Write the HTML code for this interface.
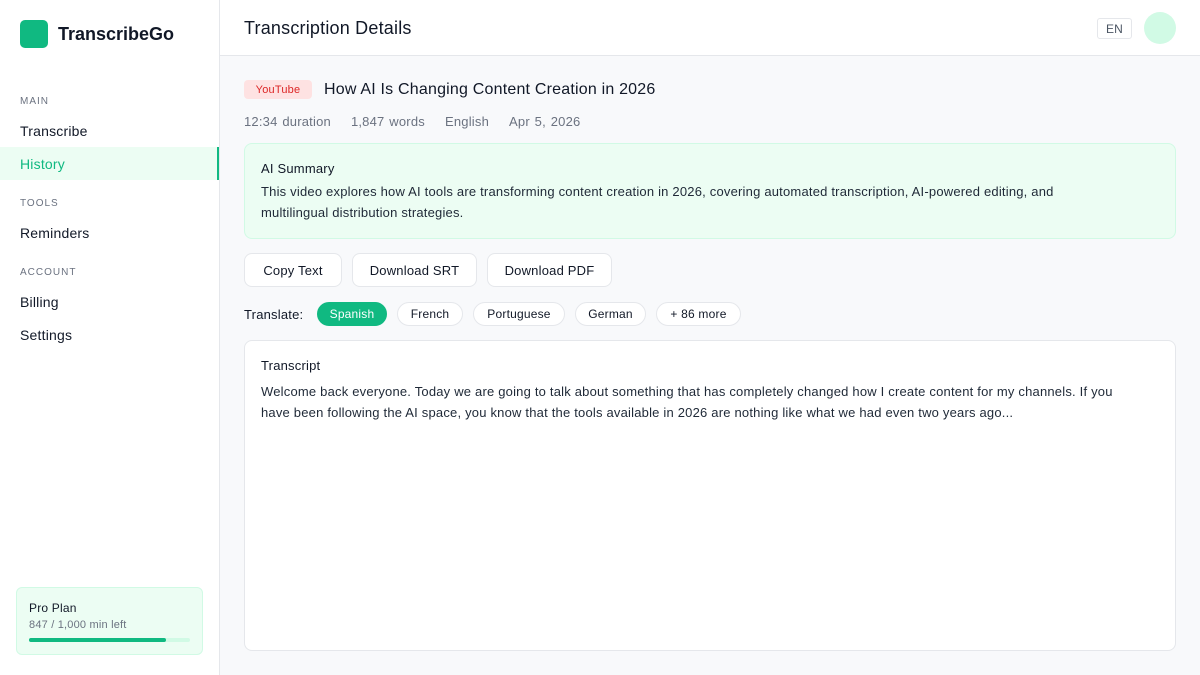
<!DOCTYPE html>
<html><head><style>
*{box-sizing:border-box;margin:0;padding:0}
body{width:1200px;height:675px;font-family:"Liberation Sans",sans-serif;color:#111827;background:#f8f9fb;position:relative;overflow:hidden;letter-spacing:0.2px}
.side{position:absolute;left:0;top:0;width:220px;height:675px;background:#fff;border-right:1px solid #e5e7eb}
.logo{position:absolute;left:20px;top:20px;width:28px;height:28px;border-radius:5px;background:#10b981}
.brand{position:absolute;left:58px;top:24px;font-size:18px;font-weight:bold;color:#111827;letter-spacing:0}
.sec{position:absolute;left:20px;font-size:10px;letter-spacing:1px;color:#6b7280}
.nav{position:absolute;left:0;width:219px;height:33px;padding-left:20px;line-height:35px;font-size:14px;color:#111827}
.nav.act{background:#ecfdf3;color:#10b981;border-right:2px solid #10b981}
.plan{position:absolute;left:16px;top:587px;width:187px;height:68px;border:1px solid #d1fae5;background:#ecfdf3;border-radius:6px}
.top{position:absolute;left:220px;top:0;right:0;height:56px;border-bottom:1px solid #e5e7eb;background:#fff}
.abs{position:absolute}
.btn{position:absolute;top:253px;height:34px;border:1px solid #e5e7eb;border-radius:8px;background:#fff;font-size:13px;line-height:33px;text-align:center}
.pill{position:absolute;top:302px;height:24px;border:1px solid #e5e7eb;border-radius:12px;background:#fff;font-size:12px;line-height:23px;text-align:center;color:#111827}
</style></head><body>
<div class="side">
<div class="logo"></div><div class="brand">TranscribeGo</div>
<div class="sec" style="top:96px">MAIN</div>
<div class="nav" style="top:114px">Transcribe</div>
<div class="nav act" style="top:147px">History</div>
<div class="sec" style="top:198px">TOOLS</div>
<div class="nav" style="top:216px">Reminders</div>
<div class="sec" style="top:267px">ACCOUNT</div>
<div class="nav" style="top:285px">Billing</div>
<div class="nav" style="top:318px">Settings</div>
<div class="plan">
<div class="abs" style="left:12px;top:13px;font-size:12px">Pro Plan</div>
<div class="abs" style="left:12px;top:31px;font-size:11px;color:#6b7280">847 / 1,000 min left</div>
<div class="abs" style="left:12px;top:50px;width:161px;height:4px;border-radius:2px;background:#d1fae5"><div style="width:85%;height:4px;border-radius:2px;background:#10b981"></div></div>
</div>
</div>
<div class="top">
<div class="abs" style="left:24px;top:18px;font-size:18px">Transcription Details</div>
<div class="abs" style="left:877px;top:18px;width:35px;height:21px;border:1px solid #e5e7eb;border-radius:3px;font-size:12px;line-height:20px;text-align:center;color:#4b5563">EN</div>
<div class="abs" style="left:924px;top:12px;width:32px;height:32px;border-radius:50%;background:#d1fae5"></div>
</div>
<div class="abs" style="left:244px;top:80px;width:68px;height:19px;border-radius:4px;background:#fee2e2;color:#dc2626;font-size:11px;line-height:20px;text-align:center">YouTube</div>
<div class="abs" style="left:324px;top:81px;font-size:16px">How AI Is Changing Content Creation in 2026</div>
<div class="abs" style="left:244px;top:114px;font-size:13px;color:#6b7280;word-spacing:1px">12:34 duration<span style="margin-left:20px">1,847 words</span><span style="margin-left:20px">English</span><span style="margin-left:20px">Apr 5, 2026</span></div>
<div class="abs" style="left:244px;top:143px;width:932px;height:96px;border:1px solid #d1fae5;background:#ecfdf3;border-radius:8px;padding:17px 16px">
<div style="font-size:13px;margin-bottom:5px">AI Summary</div>
<div style="font-size:13px;line-height:21px;color:#1f2937;width:840px">This video explores how AI tools are transforming content creation in 2026, covering automated transcription, AI-powered editing, and multilingual distribution strategies.</div>
</div>
<div class="btn" style="left:244px;width:98px">Copy Text</div>
<div class="btn" style="left:352px;width:125px">Download SRT</div>
<div class="btn" style="left:487px;width:125px">Download PDF</div>
<div class="abs" style="left:244px;top:307px;font-size:13px">Translate:</div>
<div class="pill" style="left:317px;width:70px;background:#10b981;border-color:#10b981;color:#fff">Spanish</div>
<div class="pill" style="left:397px;width:66px">French</div>
<div class="pill" style="left:473px;width:92px">Portuguese</div>
<div class="pill" style="left:575px;width:71px">German</div>
<div class="pill" style="left:656px;width:85px">+ 86 more</div>
<div class="abs" style="left:244px;top:340px;width:932px;height:311px;border:1px solid #e5e7eb;background:#fff;border-radius:8px;padding:17px 16px">
<div style="font-size:13px;margin-bottom:8px">Transcript</div>
<div style="font-size:13px;line-height:21px;color:#1f2937;width:870px">Welcome back everyone. Today we are going to talk about something that has completely changed how I create content for my channels. If you have been following the AI space, you know that the tools available in 2026 are nothing like what we had even two years ago...</div>
</div>
</body></html>
